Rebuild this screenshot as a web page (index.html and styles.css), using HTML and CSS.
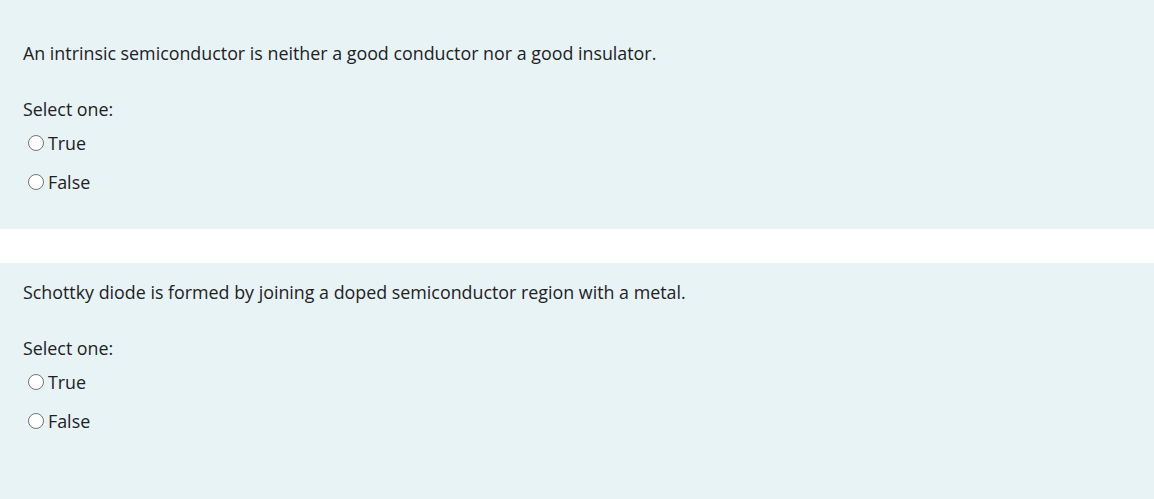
FILE: index.html
```html
<!DOCTYPE html>
<html lang="en">
<head>
<meta charset="utf-8">
<title>Quiz</title>
<link rel="stylesheet" href="styles.css">
</head>
<body>
<div class="quiz">
  <div class="que que-first">
    <div class="qtext">An intrinsic semiconductor is neither a good conductor nor a good insulator.</div>
    <div class="prompt">Select one:</div>
    <div class="answers">
      <label class="choice"><input type="radio" name="q1" class="radio"><span class="choice-label">True</span></label>
      <label class="choice"><input type="radio" name="q1" class="radio"><span class="choice-label">False</span></label>
    </div>
  </div>
  <div class="que que-second">
    <div class="qtext">Schottky diode is formed by joining a doped semiconductor region with a metal.</div>
    <div class="prompt">Select one:</div>
    <div class="answers">
      <label class="choice"><input type="radio" name="q2" class="radio"><span class="choice-label">True</span></label>
      <label class="choice"><input type="radio" name="q2" class="radio"><span class="choice-label">False</span></label>
    </div>
  </div>
</div>
</body>
</html>
```
FILE: styles.css
```css
html, body {
  margin: 0;
  padding: 0;
  background: #ffffff;
}

body {
  font-family: "Open Sans", "Noto Sans", "Liberation Sans", sans-serif;
  font-size: 17.85px;
  line-height: 28px;
  color: #1d2125;
  overflow: hidden;
}

.quiz {
  display: flex;
  flex-direction: column;
  gap: 34px;
}

.que {
  background: #e7f3f5;
  padding: 15px 23px 33px 23px;
  display: flex;
  flex-direction: column;
}

.que-first {
  padding-top: 39px;
  height: 229px;
  box-sizing: border-box;
}

.que-second {
  min-height: 260px;
  box-sizing: border-box;
}

.qtext {
  height: 28px;
}

.prompt {
  margin-top: 28px;
  height: 28px;
}

.answers {
  margin-top: 6px;
  display: flex;
  flex-direction: column;
  gap: 11px;
}

.choice {
  display: flex;
  align-items: center;
  height: 28px;
  padding-left: 5px;
}

.radio {
  appearance: none;
  -webkit-appearance: none;
  width: 16px;
  height: 16px;
  margin: 0 4px 0 0;
  border: 1px solid #767676;
  border-radius: 50%;
  background: #ffffff;
  box-sizing: border-box;
  flex: none;
}
```
